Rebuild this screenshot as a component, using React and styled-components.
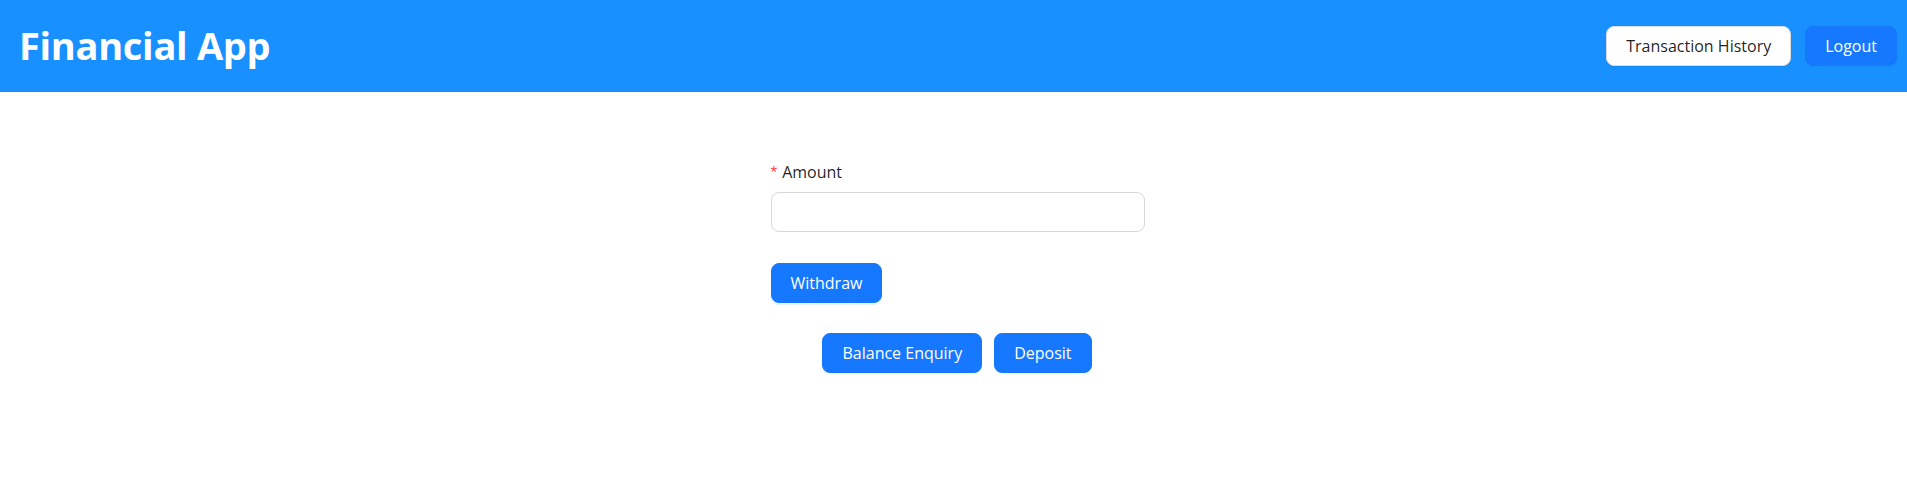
import React from "react";
import styled, { createGlobalStyle } from "styled-components";

const GlobalStyle = createGlobalStyle`
  html, body { margin: 0; padding: 0; background: #ffffff; }
  body {
    font-family: "Open Sans", "Noto Sans", "Liberation Sans", sans-serif;
    color: rgba(0, 0, 0, 0.88);
  }
  * { box-sizing: border-box; }
`;

const Header = styled.header`
  height: 92px;
  background: #1890ff;
  display: flex;
  align-items: center;
  justify-content: space-between;
  padding: 0 10px 0 19px;
`;

const Title = styled.h1`
  margin: 0;
  color: #ffffff;
  font-size: 38px;
  font-weight: 700;
  letter-spacing: -0.3px;
  line-height: 1.2;
`;

const Actions = styled.div`
  display: flex;
  align-items: center;
  gap: 14px;
`;

const Button = styled.button`
  height: 40px;
  padding: 0 19px;
  border-radius: 8px;
  font-family: inherit;
  font-size: 16px;
  line-height: 1;
  cursor: pointer;
  border: 1px solid ${(p) => (p.$primary ? "#1677ff" : "#d9d9d9")};
  background: ${(p) => (p.$primary ? "#1677ff" : "#ffffff")};
  color: ${(p) => (p.$primary ? "#ffffff" : "rgba(0, 0, 0, 0.88)")};
  box-shadow: ${(p) =>
    p.$primary ? "0 2px 0 rgba(5, 145, 255, 0.1)" : "0 2px 0 rgba(0, 0, 0, 0.02)"};
`;

const Main = styled.main`
  display: flex;
  flex-direction: column;
  align-items: center;
  padding-top: 60px;
`;

const Form = styled.form`
  width: 374px;
  margin-left: 8px;
  display: flex;
  flex-direction: column;
`;

const Label = styled.label`
  height: 40px;
  display: flex;
  align-items: center;
  font-size: 16px;
  color: rgba(0, 0, 0, 0.88);
`;

const Required = styled.span`
  color: #ff4d4f;
  font-family: "Liberation Sans", sans-serif;
  font-size: 17px;
  margin-right: 5px;
  line-height: 1;
`;

const Input = styled.input`
  height: 40px;
  width: 100%;
  border: 1px solid #d9d9d9;
  border-radius: 8px;
  padding: 7px 11px;
  font-size: 16px;
  font-family: inherit;
  outline: none;
`;

const SubmitRow = styled.div`
  margin-top: 31px;
`;

const BottomRow = styled.div`
  display: flex;
  gap: 12px;
  margin-top: 30px;
  margin-left: 7px;
`;

export default function App() {
  return (
    <>
      <GlobalStyle />
      <Header>
        <Title>Financial App</Title>
        <Actions>
          <Button type="button">Transaction History</Button>
          <Button type="button" $primary>
            Logout
          </Button>
        </Actions>
      </Header>
      <Main>
        <Form onSubmit={(e) => e.preventDefault()}>
          <Label htmlFor="amount">
            <Required>*</Required>
            Amount
          </Label>
          <Input id="amount" type="number" />
          <SubmitRow>
            <Button type="submit" $primary>
              Withdraw
            </Button>
          </SubmitRow>
        </Form>
        <BottomRow>
          <Button type="button" $primary>
            Balance Enquiry
          </Button>
          <Button type="button" $primary>
            Deposit
          </Button>
        </BottomRow>
      </Main>
    </>
  );
}
